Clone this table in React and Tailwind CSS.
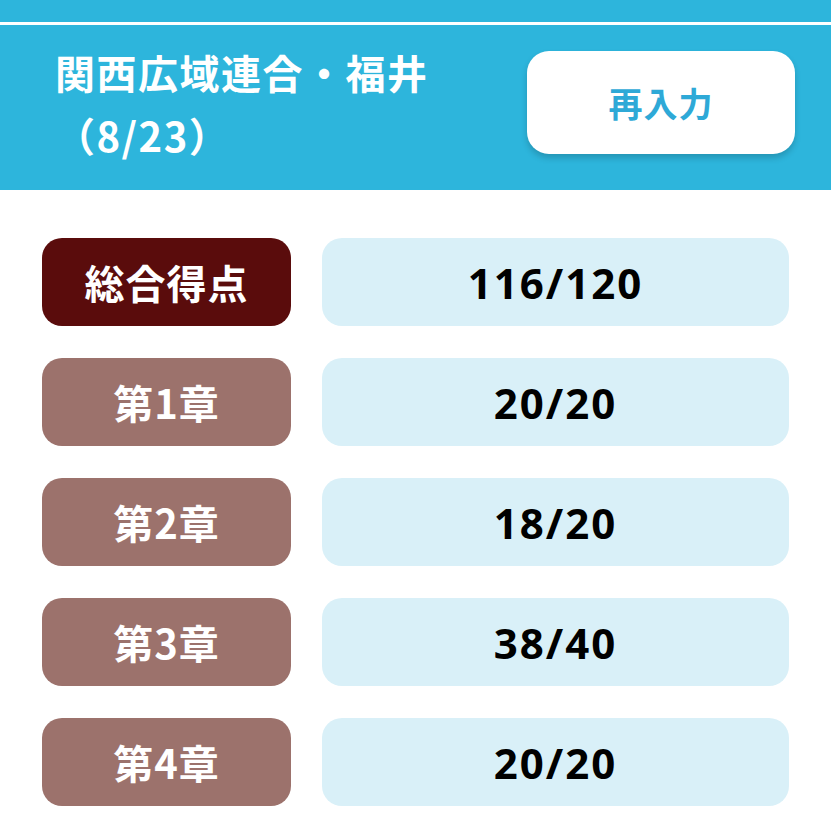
import React from "react";

const rows = [
  { label: "総合得点", score: "116/120", total: true },
  { label: "第1章", score: "20/20" },
  { label: "第2章", score: "18/20" },
  { label: "第3章", score: "38/40" },
  { label: "第4章", score: "20/20" },
];

const jp = { fontFamily: '"Noto Sans CJK JP", "Noto Sans", sans-serif' };
const num = { fontFamily: '"Noto Sans", "Open Sans", sans-serif' };

const App = () => {
  return (
    <div className="w-[831px] min-h-[831px] bg-white" style={jp}>
      <div className="bg-[#2db5dc]">
        <div className="h-[22px]" />
        <div className="h-[3px] bg-white" />
        <div className="h-[165px] flex items-center justify-between pl-[55px] pr-[36px]">
          <div className="text-white font-bold text-[40px] leading-[63px] tracking-[1.5px] -mt-[8px]">
            <div>関西広域連合・福井</div>
            <div>（8/23）</div>
          </div>
          <button className="w-[268px] h-[103px] -mt-[10px] bg-white rounded-[22px] shadow-[0_4px_6px_rgba(0,0,0,0.18)] text-[#2ea9d7] font-bold text-[34px] tracking-[1px]">
            再入力
          </button>
        </div>
      </div>

      <div className="flex flex-col gap-[32px] px-[42px] pt-[48px] pb-[30px]">
        {rows.map((r) => (
          <div key={r.label} className="flex gap-[31px]">
            <div
              className={
                r.total
                  ? "w-[249px] h-[88px] rounded-[20px] bg-[#5a0c0c] flex items-center justify-center text-white font-bold text-[40px] tracking-[1px]"
                  : "w-[249px] h-[88px] rounded-[20px] bg-[#9c726c] flex items-center justify-center text-white font-bold text-[40px] tracking-[1px]"
              }
            >
              {r.label}
            </div>
            <div
              className="flex-1 h-[88px] rounded-[20px] bg-[#d9f0f8] flex items-center justify-center text-black font-bold text-[42px] tracking-[2px]"
              style={num}
            >
              {r.score}
            </div>
          </div>
        ))}
      </div>
    </div>
  );
};

export default App;
